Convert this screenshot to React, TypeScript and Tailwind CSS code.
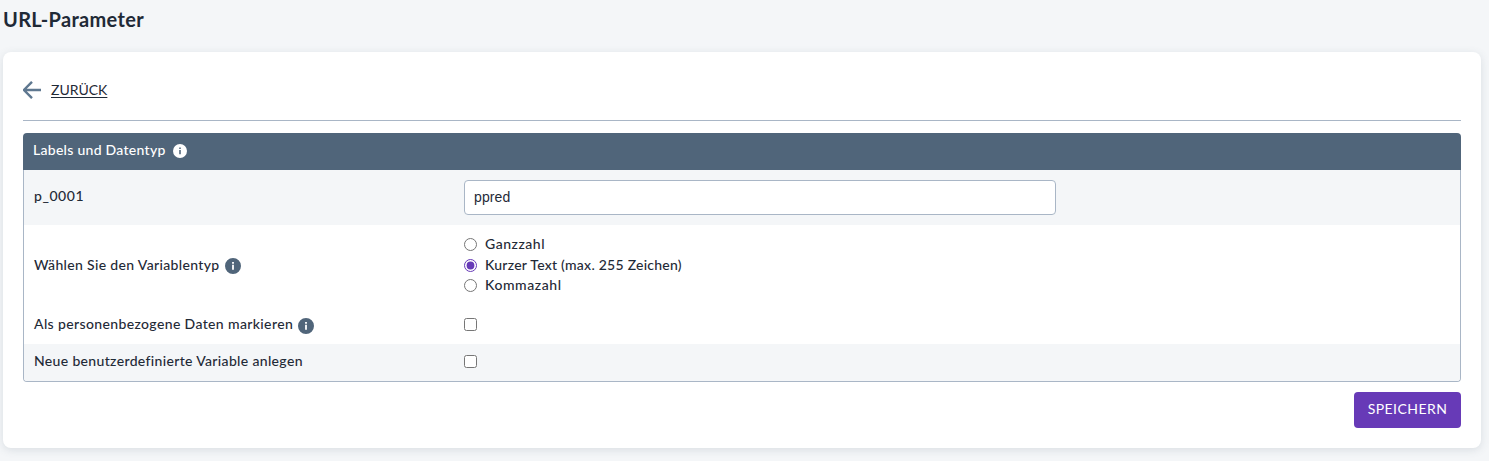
import type { ReactNode } from 'react'

function InfoIcon({ size, className }: { size: number; className: string }) {
  return (
    <svg width={size} height={size} viewBox="0 0 16 16" className={className} aria-hidden="true">
      <path
        fill="currentColor"
        fillRule="evenodd"
        d="M8 0a8 8 0 1 0 0 16A8 8 0 0 0 8 0Zm-.9 4h1.8v1.7H7.1V4Zm0 2.8h1.8v5H7.1v-5Z"
      />
    </svg>
  )
}

function Row({ label, className, children }: { label: ReactNode; className: string; children: ReactNode }) {
  return (
    <div className={`flex items-center px-2.5 ${className}`}>
      <div className="flex w-[430px] items-center">{label}</div>
      {children}
    </div>
  )
}

function Option({ name, className, checked }: { name: string; className: string; checked?: boolean }) {
  return (
    <label className="flex h-[20.5px] items-center gap-2">
      <input type="radio" name="type" defaultChecked={checked} className="size-[13px] accent-[#673ab7]" />
      <span className={className}>{name}</span>
    </label>
  )
}

export default function App() {
  return (
    <div className="h-[461px] overflow-hidden bg-[#f4f6f8] pl-[3px] pr-2 font-['Lato','Noto_Sans',sans-serif] text-sm leading-5 font-medium text-[#1f2a37]">
      <h1 className="h-[52px] pt-[7px] text-xl leading-6 font-bold tracking-[0.32px]">URL-Parameter</h1>
      <main className="h-[396px] rounded-lg bg-white px-5 shadow-[0_2px_8px_rgba(80,100,120,0.16)]">
        <div className="flex h-[69px] items-center border-b border-[#a9b6c6] pt-[7px]">
          <svg width="18" height="18" viewBox="0 0 18 18" fill="none" stroke="#5f7890" strokeWidth="2.4" className="mr-2.5" aria-hidden="true">
            <path d="M9 .8.9 9 9 17.2M1 9h17" />
          </svg>
          <a className="font-normal underline decoration-1 underline-offset-2">ZURÜCK</a>
        </div>
        <section className="mt-3 h-[249px]">
          <header className="flex h-[37px] items-center rounded-t bg-[#50657a] px-2.5 text-white">
            <span className="-mt-[3px] tracking-[0.28px]">Labels und Datentyp</span>
            <InfoIcon size={14} className="-mt-px ml-[7px]" />
          </header>
          <div className="h-[212px] overflow-hidden rounded-b border border-t-0 border-[#a9b6c6]">
            <Row className="h-[55px] bg-[#f4f6f8]" label={<span className="-mt-[3px] tracking-[0.55px]">p_0001</span>}>
              <input
                defaultValue="ppred"
                className="h-[35px] w-[592px] rounded border border-[#a9b6c6] bg-white px-[9px] pb-0.5 font-['Liberation_Sans',sans-serif] text-sm font-normal tracking-[0.1px]"
              />
            </Row>
            <Row
              className="h-20"
              label={
                <>
                  <span className="tracking-[0.34px]">Wählen Sie den Variablentyp</span>
                  <InfoIcon size={16} className="mt-px ml-[5px] text-[#50657a]" />
                </>
              }
            >
              <div>
                <Option name="Ganzzahl" className="-mt-px tracking-[0.52px]" />
                <Option name="Kurzer Text (max. 255 Zeichen)" className="tracking-[0.25px]" checked />
                <Option name="Kommazahl" className="-mt-px tracking-[0.58px]" />
              </div>
            </Row>
            <Row
              className="h-[39px]"
              label={
                <>
                  <span className="-mt-0.5 tracking-[0.37px]">Als personenbezogene Daten markieren</span>
                  <InfoIcon size={16} className="mt-0.5 ml-[5px] text-[#50657a]" />
                </>
              }
            >
              <input type="checkbox" className="size-[13px]" />
            </Row>
            <Row
              className="h-[37px] bg-[#f4f6f8]"
              label={<span className="-mt-[3px] tracking-[0.34px]">Neue benutzerdefinierte Variable anlegen</span>}
            >
              <input type="checkbox" className="-mt-[3px] size-[13px]" />
            </Row>
          </div>
        </section>
        <div className="mt-2.5 flex justify-end">
          <button className="h-9 w-[107px] rounded bg-[#673ab7] pb-0.5 font-normal tracking-[0.45px] text-white">SPEICHERN</button>
        </div>
      </main>
    </div>
  )
}
